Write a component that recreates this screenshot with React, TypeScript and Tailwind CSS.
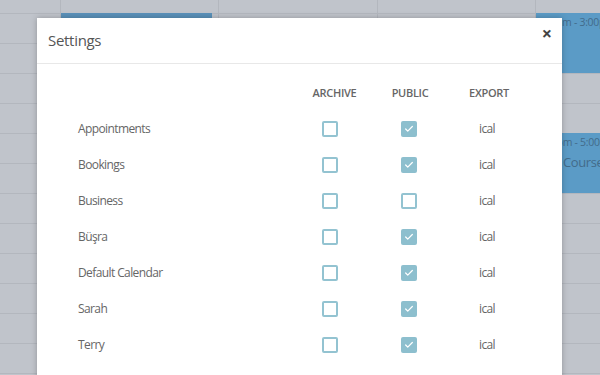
import { Check } from "lucide-react";

type Row = {
    name: string;
    archive: boolean;
    isPublic: boolean;
};

const rows: Row[] = [
    { name: "Appointments", archive: false, isPublic: true },
    { name: "Bookings", archive: false, isPublic: true },
    { name: "Business", archive: false, isPublic: false },
    { name: "Büşra", archive: false, isPublic: true },
    { name: "Default Calendar", archive: false, isPublic: true },
    { name: "Sarah", archive: false, isPublic: true },
    { name: "Terry", archive: false, isPublic: true },
];

function Box({ checked }: { checked: boolean }) {
    return checked ? (
        <div className="h-4 w-4 rounded-[2px] bg-[#8dbfce] flex items-center justify-center">
            <Check size={10} strokeWidth={3} className="text-white" />
        </div>
    ) : (
        <div className="h-4 w-4 rounded-[2px] border-2 border-[#93c3d1] bg-white" />
    );
}

function CalendarBackground() {
    const lines = Array.from({ length: 12 });
    return (
        <div className="flex flex-col">
            <div className="h-[14px] flex border-b border-[#b3b7be]">
                <div className="w-[60px]" />
                <div className="w-[158px] border-l border-[#b3b7be]" />
                <div className="w-[159px] border-l border-[#b3b7be]" />
                <div className="w-[158px] border-l border-[#b3b7be]" />
                <div className="flex-1 border-l border-[#b3b7be]" />
            </div>
            {lines.map((_, i) => (
                <div key={i} className="h-[30px] flex border-b border-[#b3b7be]">
                    <div className="w-[60px]" />
                    <div className="w-[158px] border-l border-[#b3b7be]" />
                    <div className="w-[159px] border-l border-[#b3b7be]" />
                    <div className="w-[158px] border-l border-[#b3b7be]" />
                    <div className="flex-1 border-l border-[#b3b7be]" />
                </div>
            ))}
        </div>
    );
}

export default function App() {
    return (
        <div
            className="relative w-[600px] h-[375px] overflow-hidden bg-[#c0c4cb]"
            style={{ fontFamily: "'Open Sans', sans-serif" }}
        >
            <CalendarBackground />

            {/* events behind the overlay */}
            <div className="absolute left-[61px] top-[13px] w-[151px] h-[40px] bg-[#5a91b9]" />
            <div className="absolute left-[536px] top-[13px] w-[64px] h-[60px] bg-[#5b9bc6] pl-[1px] pt-[4px] text-[10.5px] leading-none tracking-[-0.3px] text-[#436b8a] whitespace-nowrap overflow-hidden">
                9:00am - 3:00pm
            </div>
            <div className="absolute left-[536px] top-[133px] w-[64px] h-[60px] bg-[#5b9bc6] pl-[1px] pt-[4px] text-[#436b8a] whitespace-nowrap overflow-hidden">
                <div className="text-[10.5px] leading-none tracking-[-0.3px]">1:00pm - 5:00pm</div>
                <div className="text-[13px] leading-none tracking-[-0.4px] pl-[26px] mt-[8px]">Course</div>
            </div>

            {/* modal */}
            <div className="absolute left-[37px] top-[18px] w-[525px] h-[420px] bg-white shadow-[0_0_6px_rgba(0,0,0,0.25)]">
                <div className="h-[46px] flex items-center justify-between pl-[11px] pr-[10px] border-b border-[#e8e8e8]">
                    <span className="text-[15px] tracking-[-0.3px] text-[#555]">Settings</span>
                    <span className="text-[18px] font-bold text-[#444] leading-none -mt-[15px]">×</span>
                </div>

                <div className="pt-[11px] pl-[41px]">
                    <div className="h-[36px] flex items-center text-[11px] font-semibold tracking-[-0.3px] text-[#666]">
                        <div className="w-[218px]" />
                        <div className="w-[77px] text-center">ARCHIVE</div>
                        <div className="w-[74px] text-center">PUBLIC</div>
                        <div className="w-[84px] text-center">EXPORT</div>
                    </div>
                    {rows.map((row) => (
                        <div key={row.name} className="h-[36px] flex items-center text-[12px] tracking-[-0.6px] text-[#666]">
                            <div className="w-[218px]">{row.name}</div>
                            <div className="w-[77px] flex justify-center pr-[10px]">
                                <Box checked={row.archive} />
                            </div>
                            <div className="w-[74px] flex justify-center pr-[2px]">
                                <Box checked={row.isPublic} />
                            </div>
                            <div className="w-[84px] text-center pr-[4px]">ical</div>
                        </div>
                    ))}
                </div>
            </div>
        </div>
    );
}
